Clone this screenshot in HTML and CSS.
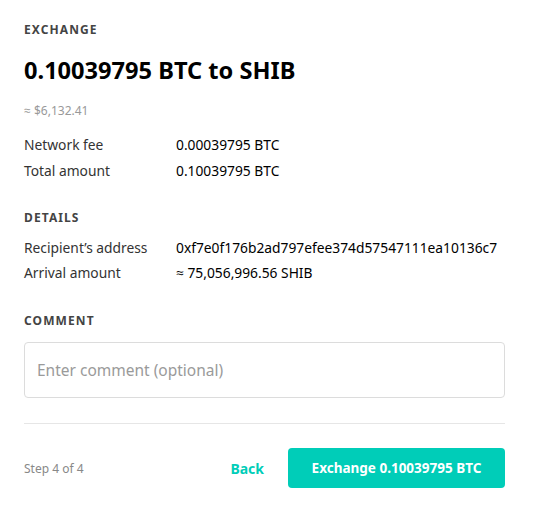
FILE: index.html
```html
<!DOCTYPE html>
<html>
<head>
<meta charset="utf-8">
<link rel="stylesheet" href="styles.css">
</head>
<body>
<div class="panel">
  <div class="section-label">EXCHANGE</div>
  <h1 class="title">0.10039795 BTC to SHIB</h1>
  <div class="approx">≈ $6,132.41</div>
  <div class="rows">
    <div class="row"><span class="k">Network fee</span><span class="v">0.00039795 BTC</span></div>
    <div class="row"><span class="k">Total amount</span><span class="v">0.10039795 BTC</span></div>
  </div>
  <div class="section-label details">DETAILS</div>
  <div class="rows second">
    <div class="row"><span class="k">Recipient’s address</span><span class="v">0xf7e0f176b2ad797efee374d57547111ea10136c7</span></div>
    <div class="row"><span class="k">Arrival amount</span><span class="v">≈ 75,056,996.56 SHIB</span></div>
  </div>
  <div class="section-label comment">COMMENT</div>
  <div class="input"><span class="placeholder">Enter comment (optional)</span></div>
  <div class="divider"></div>
  <div class="footer">
    <span class="step">Step 4 of 4</span>
    <span class="back">Back</span>
    <span class="btn">Exchange 0.10039795 BTC</span>
  </div>
</div>
</body>
</html>
```
FILE: styles.css
```css
* { box-sizing: border-box; }
body {
  margin: 0;
  background: #fff;
  font-family: "Noto Sans", "Open Sans", sans-serif;
  color: #1a1a1a;
}
.panel {
  width: 538px;
  padding: 22px 33px 0 24px;
}
.section-label {
  font-size: 12px;
  font-weight: 700;
  letter-spacing: 1.1px;
  color: #444;
  line-height: 16px;
}
.title {
  margin: 17px 0 0;
  font-size: 23.6px;
  font-weight: 700;
  line-height: 30px;
  color: #000;
}
.approx {
  margin-top: 18px;
  font-size: 12px;
  color: #999;
  line-height: 16px;
}
.rows {
  margin-top: 12px;
  display: flex;
  flex-direction: column;
}
.row {
  display: flex;
  height: 26px;
  align-items: center;
  font-size: 13.8px;
}
.rows.second .row { height: 25px; }
.k { width: 152px; color: #333; }
.v { color: #000; }
.details { margin-top: 27px; }
.rows.second { margin-top: 9px; }
.comment { margin-top: 28px; }
.input {
  margin-top: 13px;
  height: 56px;
  border: 1px solid #dcdcdc;
  border-radius: 4px;
  display: flex;
  align-items: center;
  padding-left: 12px;
}
.placeholder { font-size: 15.5px; color: #9a9a9a; }
.divider {
  margin-top: 25px;
  height: 1px;
  background: #e6e6e6;
}
.footer {
  margin-top: 24px;
  display: flex;
  align-items: center;
  height: 40px;
}
.step { font-size: 12px; color: #888; flex: 1; }
.back {
  font-size: 14px;
  font-weight: 700;
  color: #00cdb8;
  margin-right: 24px;
}
.btn {
  width: 217px;
  height: 40px;
  border-radius: 4px;
  background: #00cdb8;
  color: #fff;
  font-size: 13.5px;
  font-weight: 700;
  display: flex;
  align-items: center;
  justify-content: center;
}
```
